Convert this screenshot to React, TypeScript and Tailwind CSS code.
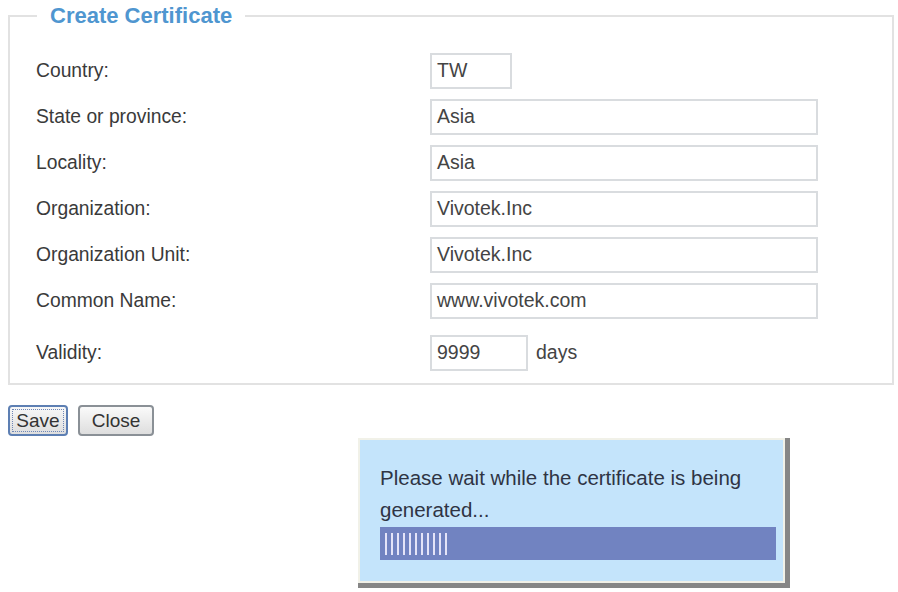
import React from "react";

const rows: { label: string; value: string; w: string }[] = [
  { label: "Country:", value: "TW", w: "w-[82px]" },
  { label: "State or province:", value: "Asia", w: "w-[388px]" },
  { label: "Locality:", value: "Asia", w: "w-[388px]" },
  { label: "Organization:", value: "Vivotek.Inc", w: "w-[388px]" },
  { label: "Organization Unit:", value: "Vivotek.Inc", w: "w-[388px]" },
  { label: "Common Name:", value: "www.vivotek.com", w: "w-[388px]" },
];

function Field({ value, w }: { value: string; w: string }) {
  return (
    <div
      className={`${w} h-[36px] border-2 border-[#d9dcdf] bg-white flex items-center pl-[5px] text-[#444] text-[19.5px]`}
    >
      {value}
    </div>
  );
}

export default function App() {
  return (
    <div
      className="relative w-[898px] h-[592px] bg-white overflow-hidden"
      style={{ fontFamily: '"Liberation Sans", Arial, sans-serif' }}
    >
      <div className="pl-[8px] pt-[3px] w-[894px]">
        <fieldset className="border-2 border-[#e2e2e2] pl-[26px] pr-[74px] pt-[25px] pb-[12px]">
          <legend className="ml-[1px] px-[13px] text-[22px] leading-[25px] font-bold text-[#4f96d0]">
            Create Certificate
          </legend>
          <div className="flex flex-col gap-[10px]">
            {rows.map((r) => (
              <div key={r.label} className="flex items-center">
                <div className="w-[394px] text-[19.3px] text-[#3a3a3a]">{r.label}</div>
                <Field value={r.value} w={r.w} />
              </div>
            ))}
            <div className="flex items-center mt-[6px]">
              <div className="w-[394px] text-[19.3px] text-[#3a3a3a]">Validity:</div>
              <Field value="9999" w="w-[98px]" />
              <span className="ml-[8px] text-[19.5px] text-[#444]">days</span>
            </div>
          </div>
        </fieldset>
      </div>

      <div className="flex gap-[10px] pl-[8px] pt-[20px]">
        <button className="h-[31px] w-[60px] rounded-[4px] border-2 border-[#5d7fb3] bg-gradient-to-b from-[#f8f8f8] to-[#dedede] text-[19px] text-[#333] flex items-center justify-center p-[2px]">
          <span className="w-full h-full flex items-center justify-center border border-dotted border-[#6e86b6] leading-none">
            Save
          </span>
        </button>
        <button className="h-[31px] w-[76px] rounded-[4px] border-2 border-[#8a9096] bg-gradient-to-b from-[#fafafa] to-[#dedede] text-[19px] text-[#333] flex items-center justify-center leading-none">
          Close
        </button>
      </div>

      <div className="absolute left-[358px] top-[438px] w-[432px] h-[150px] bg-[#868686] pr-[5px] pb-[5px]">
        <div className="w-full h-full border-2 border-[#f1f1e8] bg-[#c4e4fb] pl-[20px] pr-[6px] pt-[22px]">
          <div className="text-[20.5px] leading-[32px] text-[#2f3444] whitespace-nowrap">
            Please wait while the certificate is being
            <br />
            generated...
          </div>
          <div className="mt-[1px] w-[396px] h-[33px] bg-[#7183c1] flex items-center pl-[5px] gap-[4px]">
            {Array.from({ length: 11 }).map((_, i) => (
              <div key={i} className="w-[2px] h-[22px] bg-[#e4e4f8]" />
            ))}
          </div>
        </div>
      </div>
    </div>
  );
}
